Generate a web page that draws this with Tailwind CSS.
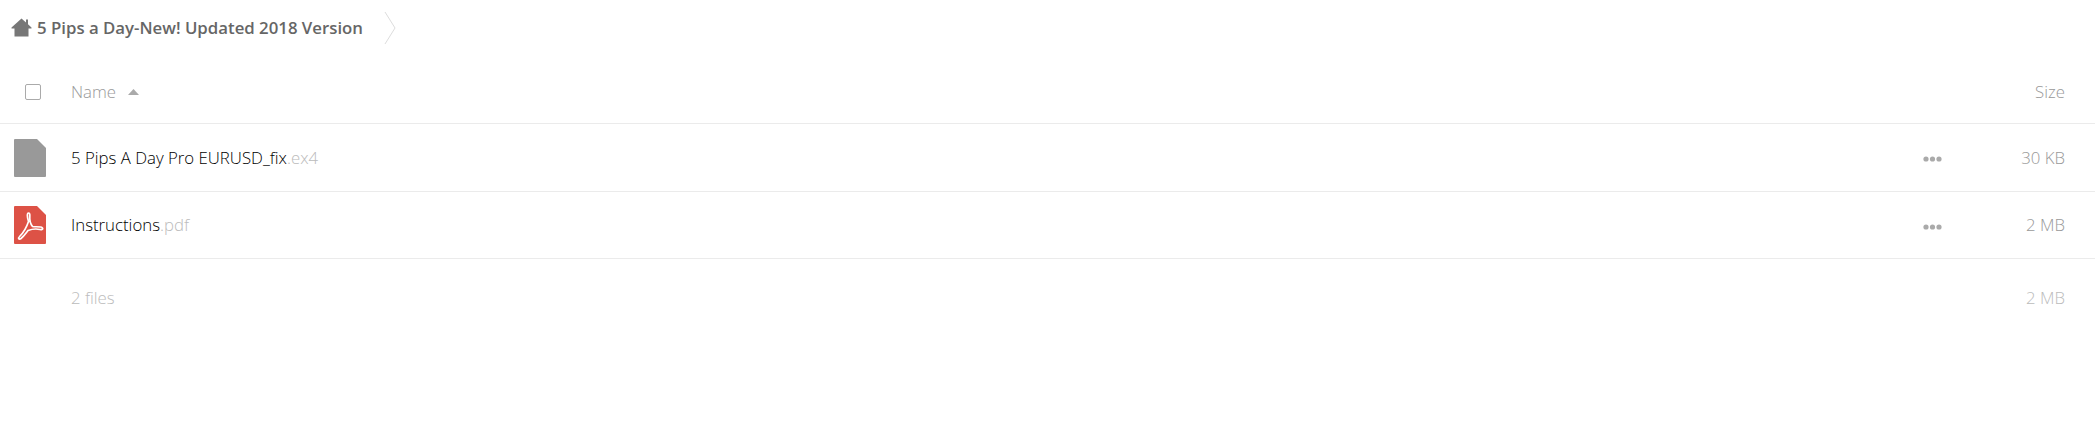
<!DOCTYPE html>
<html lang="en">
<head>
    <meta charset="UTF-8">
    <title>5 Pips a Day-New! Updated 2018 Version</title>
    <script src="https://cdn.jsdelivr.net/npm/@tailwindcss/browser@4"></script>
</head>
<body class="bg-white font-['Open_Sans',sans-serif] overflow-hidden">
    <!-- Breadcrumb -->
    <div class="flex items-center h-[56px] pl-[11px]">
        <svg class="w-[21px] h-[19px] mr-[5px] mb-[1px]" viewBox="0 0 21 19">
            <path d="M10.5 0.5 L15 4.5 V1.5 H17 V6.3 L20.5 9.5 L20.5 10.5 H17.5 V18.5 H3.5 V10.5 H0.5 V9.5 Z" fill="#777"/>
        </svg>
        <span class="text-[16.8px] font-semibold text-[#666]">5 Pips a Day-New! Updated 2018 Version</span>
        <svg class="w-[12px] h-[34px] ml-[21px]" viewBox="0 0 12 34">
            <path d="M1 1 L11 17 L1 33" fill="none" stroke="#ddd" stroke-width="1"/>
        </svg>
    </div>

    <!-- Header row -->
    <div class="flex items-center h-[68px] pt-[4px] border-b border-[#ebebeb] pl-[25px] pr-[30px] text-[16.8px] font-light text-[#999]">
        <span class="w-[16px] h-[16px] border border-[#aaa] rounded-[2px] mr-[30px]"></span>
        <span class="mt-[1px]">Name</span>
        <svg class="w-[11px] h-[6px] ml-[12px]" viewBox="0 0 11 6"><path d="M5.5 0 L11 6 H0 Z" fill="#aaa"/></svg>
        <span class="ml-auto mt-[1px]">Size</span>
    </div>

    <!-- File rows -->
    <div class="flex items-center h-[68px] border-b border-[#ebebeb] pr-[30px] text-[16.8px] font-light">
        <svg class="w-[32px] h-[38px] ml-[14px] mr-[25px]" viewBox="0 0 32 38">
            <path d="M1 0 H23 L32 9 V37 Q32 38 31 38 H1 Q0 38 0 37 V1 Q0 0 1 0 Z" fill="#999"/>
        </svg>
        <span class="text-black">5 Pips A Day Pro EURUSD_fix<span class="text-[#bbb]">.ex4</span></span>
        <svg class="w-[19px] h-[6px] ml-auto mr-[63px] mt-[3px]" viewBox="0 0 19 6" fill="#aaa">
            <circle cx="3" cy="3" r="2.6"/><circle cx="9.5" cy="3" r="2.6"/><circle cx="16" cy="3" r="2.6"/>
        </svg>
        <span class="w-[60px] text-right text-[#999]">30 KB</span>
    </div>
    <div class="flex items-center h-[67px] border-b border-[#ebebeb] pr-[30px] text-[16.8px] font-light">
        <svg class="w-[32px] h-[38px] ml-[14px] mr-[25px]" viewBox="0 0 32 38">
            <path d="M1 0 H23 L32 9 V37 Q32 38 31 38 H1 Q0 38 0 37 V1 Q0 0 1 0 Z" fill="#dd5246"/>
            <path d="M14.5 7 C13 7 13 11 14.5 15.5 C13 20 10 26 6 30 C3.5 32.5 5 34 7 32.5 C10 30 12 27 14 24.5 C18 23 22 22.5 26 23.5 C29.5 24 29.5 21.5 26.5 21 C23.5 20.5 20.5 21 18.5 20.5 C16.5 18 15.5 14 15.8 10 C16 8 15.5 7 14.5 7 Z" fill="none" stroke="#fff" stroke-width="1.7"/>
        </svg>
        <span class="text-black">Instructions<span class="text-[#bbb]">.pdf</span></span>
        <svg class="w-[19px] h-[6px] ml-auto mr-[63px] mt-[3px]" viewBox="0 0 19 6" fill="#aaa">
            <circle cx="3" cy="3" r="2.6"/><circle cx="9.5" cy="3" r="2.6"/><circle cx="16" cy="3" r="2.6"/>
        </svg>
        <span class="w-[60px] text-right text-[#999]">2 MB</span>
    </div>

    <!-- Summary -->
    <div class="flex items-center justify-between h-[78px] pl-[71px] pr-[30px] text-[16.8px] font-light text-[#bbb]">
        <span>2 files</span>
        <span>2 MB</span>
    </div>
</body>
</html>
